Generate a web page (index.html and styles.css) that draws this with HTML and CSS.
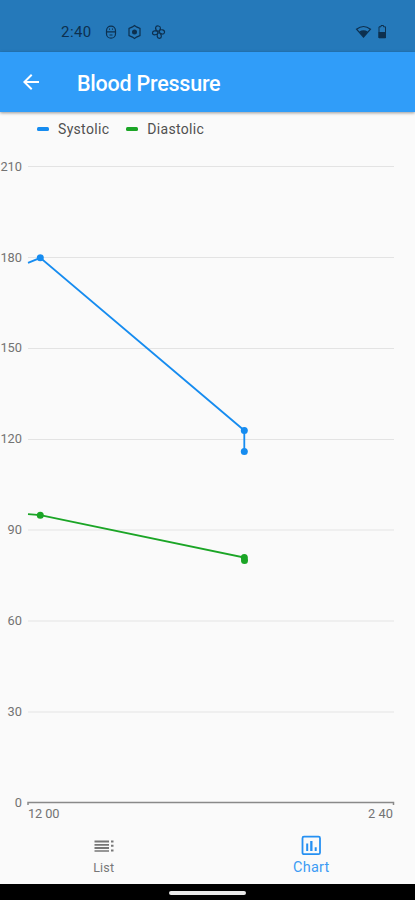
FILE: index.html
```html
<!DOCTYPE html>
<html lang="en">
<head>
<meta charset="utf-8">
<title>Blood Pressure</title>
<link rel="stylesheet" href="styles.css">
</head>
<body>
<div class="status">
  <span class="time">2:40</span>
  <svg class="notifications" width="64" height="16" viewBox="0 0 64 16" fill="none" stroke="currentColor" stroke-width="1.2">
    <rect x="2.5" y="2.2" width="9" height="12" rx="4.5"/><path d="M2.5 7.800h9M5 5.200h1M8 5.200h1M5.500 11h3"/>
    <path d="M30.500 1.500l2 1.400 3.500 1.600v7l-3.500 1.600-2 1.400-2-1.400-3.500-1.600v-7l3.500-1.600z"/><circle cx="30.500" cy="8" r="1.900" fill="currentColor"/>
    <path d="M54 7.500C50 5 51.500 1.500 54.500 2c3 .5 2 3.500.5 5.200C57 4.500 61 6 60.500 8.500c-.5 2.500-3.500 1.500-5 .2 2.500 2 2.500 5.300 0 5.600-2.800.2-2.800-3.300-1.500-5.300-1.500 2.500-5.500 2.500-5.500 0S52 6.500 54 7.500z"/><circle cx="54.600" cy="8" r="1"/>
  </svg>
  <svg class="system" width="34" height="18" viewBox="0 0 34 18">
    <path d="M1.500 6.200Q8.500.8 15.500 6.200L8.500 14z" fill="none" stroke="currentColor" stroke-width="1.200"/>
    <path d="M4.300 8.500Q8.500 6.200 12.700 8.500L8.500 14z" fill="currentColor"/>
    <path d="M24 3.800h2V2.500h2.500v1.300h2v11H24z" fill="none" stroke="currentColor" stroke-width="1"/>
    <path d="M23.500 9H31v6h-7.500z" fill="currentColor"/>
  </svg>
</div>
<header class="appbar">
  <svg class="back" width="24" height="24" viewBox="0 0 24 24"><path d="M20 11H7.830l5.590-5.590L12 4l-8 8 8 8 1.410-1.410L7.830 13H20z" fill="currentColor"/></svg>
  <h1>Blood Pressure</h1>
</header>
<main>
  <div class="legend">
    <span class="key systolic">Systolic</span>
    <span class="key diastolic">Diastolic</span>
  </div>
  <svg class="chart" width="415" height="679" viewBox="0 145 415 679">
    <path class="grid" d="M28 166.500H394M28 257.500H394M28 348.500H394M28 439.500H394M28 530H394M28 621H394M28 712H394"/>
    <path class="axis" d="M28 805V802.500H393.500V805"/>
    <g class="ticks" text-anchor="end">
      <text x="22" y="171">210</text><text x="22" y="261.500">180</text><text x="22" y="352">150</text><text x="22" y="443">120</text>
      <text x="22" y="534">90</text><text x="22" y="625">60</text><text x="22" y="716">30</text><text x="22" y="807">0</text>
      <text x="28" y="817.500" text-anchor="start" textLength="31.500">12 00</text><text x="393" y="817.500" textLength="25">2 40</text>
    </g>
    <g class="series-systolic">
      <path d="M28 262.800L40.300 257.800 244.300 430.500V451.500"/>
      <circle cx="40.300" cy="257.800" r="3.500"/><circle cx="244.300" cy="430.500" r="3.500"/><circle cx="244.300" cy="451.500" r="3.500"/>
    </g>
    <g class="series-diastolic">
      <path d="M28 514.200L40.300 515.200 244.300 557.500V560.500"/>
      <circle cx="40.300" cy="515.200" r="3.500"/><circle cx="244.300" cy="557.500" r="3.500"/><circle cx="244.500" cy="560.500" r="3.500"/>
    </g>
  </svg>
</main>
<nav>
  <div class="tab list">
    <svg width="24" height="24" viewBox="0 0 24 24"><path d="M2.500 6.500h14.500v2H2.500zM2.500 9.900h14.500v1.900H2.500zM2.500 13.100h14.500v1.900H2.500zM2.500 16.200h14.500v1.500H2.500zM19 6.500h2.500v2H19zM19 10.700h2.500v2H19zM19 15.500h2.500v2H19z" fill="currentColor"/></svg>
    <span>List</span>
  </div>
  <div class="tab chart-tab">
    <svg width="24" height="24" viewBox="0 0 24 24"><rect x="3.500" y="2.700" width="17.500" height="17.500" rx="1.500" fill="none" stroke="currentColor" stroke-width="1.800"/><path d="M7.200 9.500h2V17h-2zM11.200 7h2.300v10h-2.300zM15.700 13.300h2V17h-2z" fill="currentColor"/></svg>
    <span>Chart</span>
  </div>
</nav>
<footer><span class="handle"></span></footer>
</body>
</html>
```
FILE: styles.css
```css
* { box-sizing: border-box; }
body {
  margin: 0;
  width: 415px;
  height: 900px;
  overflow: hidden;
  display: flex;
  flex-direction: column;
  background: #fafafa;
  font-family: Roboto, sans-serif;
}
.status {
  flex: 0 0 52px;
  display: flex;
  align-items: center;
  padding: 12px 26px 0 61px;
  background: #2579ba;
  color: #0d304f;
}
.time { width: 43px; font-size: 15px; letter-spacing: 0.45px; }
.system { margin-left: auto; }
.appbar {
  flex: 0 0 60px;
  display: flex;
  align-items: center;
  padding: 0 18px 0 19px;
  background: #309df9;
  color: #fff;
  box-shadow: 0 1px 3px rgba(0, 0, 0, 0.4);
}
.appbar h1 {
  margin: 3px 0 0 34px;
  font-size: 21.5px;
  font-weight: 500;
  line-height: 28px;
  letter-spacing: -0.23px;
}
main { flex: 0 0 712px; }
.legend {
  display: flex;
  height: 33px;
  padding-left: 37px;
  gap: 17px;
  color: #505050;
  font-size: 14px;
  line-height: 34px;
}
.key { display: flex; align-items: center; gap: 9px; letter-spacing: 0.32px; }
.key::before { content: ""; width: 12px; height: 4px; border-radius: 1.5px; }
.systolic::before { background: #168cf0; }
.diastolic::before { background: #1ba526; }
.chart { display: block; }
.grid { stroke: #e3e3e3; stroke-width: 1.2; }
.axis { stroke: #898989; stroke-width: 1.5; fill: none; }
.ticks { font-size: 12.8px; fill: #737373; }
.series-systolic { fill: #168cf0; stroke: #168cf0; }
.series-diastolic { fill: #1ba526; stroke: #1ba526; }
.series-systolic path, .series-diastolic path { fill: none; stroke-width: 1.8; }
.series-systolic circle, .series-diastolic circle { stroke: none; }
nav { flex: 0 0 60px; display: flex; }
.tab {
  width: 50%;
  display: flex;
  flex-direction: column;
  align-items: center;
  padding-top: 10px;
}
.list { color: #777; font-size: 12.5px; }
.list span { margin-top: 2px; letter-spacing: 0.2px; }
.chart-tab { color: #3d9cf4; font-size: 14.5px; }
.chart-tab svg { color: #2590f2; }
.chart-tab span { line-height: 20px; letter-spacing: 0.2px; }
footer { flex: 0 0 16px; display: flex; justify-content: center; background: #000; padding-top: 7px; }
.handle { width: 77px; height: 4px; border-radius: 2px; background: #e9e9e9; }
```
